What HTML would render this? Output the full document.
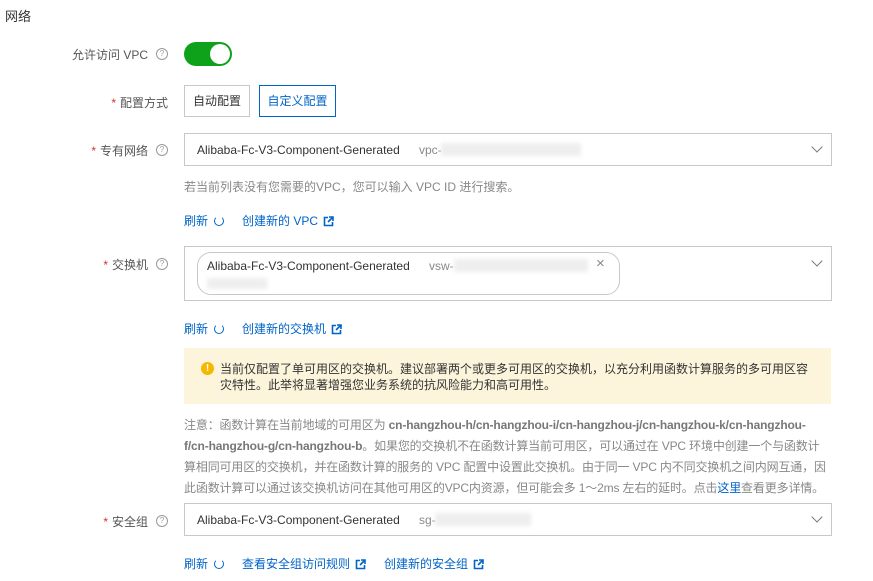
<!DOCTYPE html>
<html><head><meta charset="utf-8"><style>
body{margin:0;width:873px;height:581px;background:#fff;font-family:"Liberation Sans","Noto Sans CJK SC",sans-serif;font-size:12px;color:#333;position:relative;overflow:hidden}
.a{position:absolute;white-space:nowrap}
.lab{position:absolute;text-align:right;left:0;color:#555}
.star{color:#d93026;margin-right:4px}
.q{position:absolute;width:10px;height:10px;border:1px solid #999;border-radius:50%;font-size:8px;line-height:10px;text-align:center;color:#999}
.sel{position:absolute;left:184px;width:646px;border:1px solid #c8c8c8;background:#fff}
.chev{position:absolute;right:10px;width:7px;height:7px;border-right:1.3px solid #777;border-bottom:1.3px solid #777;transform:rotate(45deg)}
.blur{position:absolute;background:#eee;filter:blur(2px)}
.link{color:#0064c8}
.ref{display:inline-block;width:8px;height:8px;border:1.3px solid #0064c8;border-top-color:transparent;border-radius:50%;vertical-align:-1px;margin-left:6px}
svg.ext{vertical-align:-2px;margin-left:5px}
.gray{color:#888}
</style></head><body>
<div class="a" style="left:5px;top:6px;font-size:13px;color:#333">网络</div>

<div class="lab" style="top:46px;width:148px">允许访问 VPC</div><div class="q" style="left:156px;top:48px">?</div>
<div class="a" style="left:184px;top:42px;width:48px;height:24px;border-radius:12px;background:#0ea11a"><div style="position:absolute;right:2px;top:2px;width:20px;height:20px;border-radius:50%;background:#fff"></div></div>

<div class="lab" style="top:94px;width:168px"><span class="star">*</span>配置方式</div>
<div class="a" style="left:184px;top:85px;width:64px;height:30px;border:1px solid #c8c8c8;text-align:center;line-height:30px;color:#333">自动配置</div>
<div class="a" style="left:259px;top:85px;width:75px;height:30px;border:1px solid #0064c8;text-align:center;line-height:30px;color:#0064c8">自定义配置</div>

<div class="lab" style="top:142px;width:148px"><span class="star">*</span>专有网络</div><div class="q" style="left:156px;top:144px">?</div>
<div class="sel" style="top:133px;height:31px"><span class="a" style="left:12px;top:9px">Alibaba-Fc-V3-Component-Generated</span><span class="a gray" style="left:234px;top:9px">vpc-</span><div class="blur" style="left:256px;top:9px;width:140px;height:13px"></div><div class="chev" style="top:9px"></div></div>
<div class="a gray" style="left:184px;top:178px">若当前列表没有您需要的VPC，您可以输入 VPC ID 进行搜索。</div>
<div class="a link" style="left:184px;top:212px">刷新<span class="ref"></span><span style="margin-left:18px">创建新的 VPC</span><svg class="ext" width="11" height="11" viewBox="0 0 11 11"><path d="M5 1.5H1.5V9.5H9.5V6" fill="none" stroke="#0064c8" stroke-width="1.6"/><path d="M6 1H10V5M10 1L5 6" fill="none" stroke="#0064c8" stroke-width="1.6"/></svg></div>

<div class="lab" style="top:256px;width:148px"><span class="star">*</span>交换机</div><div class="q" style="left:156px;top:258px">?</div>
<div class="sel" style="top:246px;height:53px"><div class="a" style="left:12px;top:5px;width:421px;height:41px;border:1px solid #c8c8c8;border-radius:14px"><span class="a" style="left:9px;top:6px">Alibaba-Fc-V3-Component-Generated</span><span class="a gray" style="left:231px;top:6px">vsw-</span><div class="blur" style="left:256px;top:6px;width:134px;height:13px"></div><span class="a gray" style="left:398px;top:2px;font-size:15px">×</span><div class="blur" style="left:9px;top:25px;width:60px;height:11px"></div></div><div class="chev" style="top:10px"></div></div>
<div class="a link" style="left:184px;top:320px">刷新<span class="ref"></span><span style="margin-left:18px">创建新的交换机</span><svg class="ext" width="11" height="11" viewBox="0 0 11 11"><path d="M5 1.5H1.5V9.5H9.5V6" fill="none" stroke="#0064c8" stroke-width="1.6"/><path d="M6 1H10V5M10 1L5 6" fill="none" stroke="#0064c8" stroke-width="1.6"/></svg></div>

<div class="a" style="left:184px;top:348px;width:647px;height:56px;background:#fcf5dc"></div>
<div class="a" style="left:201px;top:362px;width:13px;height:13px;border-radius:50%;background:#f5b800;color:#fff;font-size:10px;font-weight:bold;text-align:center;line-height:13px">!</div>
<div class="a" style="left:220px;top:361px;line-height:16px;color:#333">当前仅配置了单可用区的交换机。建议部署两个或更多可用区的交换机，以充分利用函数计算服务的多可用区容<br>灾特性。此举将显著增强您业务系统的抗风险能力和高可用性。</div>

<div class="a gray" style="left:184px;top:415px;line-height:21px;letter-spacing:-0.15px">注意：函数计算在当前地域的可用区为 <b style="color:#777">cn-hangzhou-h/cn-hangzhou-i/cn-hangzhou-j/cn-hangzhou-k/cn-hangzhou-<br>f/cn-hangzhou-g/cn-hangzhou-b</b>。如果您的交换机不在函数计算当前可用区，可以通过在 VPC 环境中创建一个与函数计<br>算相同可用区的交换机，并在函数计算的服务的 VPC 配置中设置此交换机。由于同一 VPC 内不同交换机之间内网互通，因<br>此函数计算可以通过该交换机访问在其他可用区的VPC内资源，但可能会多 1～2ms 左右的延时。点击<span class="link">这里</span>查看更多详情。</div>

<div class="lab" style="top:513px;width:148px"><span class="star">*</span>安全组</div><div class="q" style="left:156px;top:515px">?</div>
<div class="sel" style="top:503px;height:31px"><span class="a" style="left:12px;top:9px">Alibaba-Fc-V3-Component-Generated</span><span class="a gray" style="left:234px;top:9px">sg-</span><div class="blur" style="left:250px;top:9px;width:96px;height:13px"></div><div class="chev" style="top:9px"></div></div>
<div class="a link" style="left:184px;top:555px">刷新<span class="ref"></span><span style="margin-left:18px">查看安全组访问规则</span><svg class="ext" width="11" height="11" viewBox="0 0 11 11"><path d="M5 1.5H1.5V9.5H9.5V6" fill="none" stroke="#0064c8" stroke-width="1.6"/><path d="M6 1H10V5M10 1L5 6" fill="none" stroke="#0064c8" stroke-width="1.6"/></svg><span style="margin-left:18px">创建新的安全组</span><svg class="ext" width="11" height="11" viewBox="0 0 11 11"><path d="M5 1.5H1.5V9.5H9.5V6" fill="none" stroke="#0064c8" stroke-width="1.6"/><path d="M6 1H10V5M10 1L5 6" fill="none" stroke="#0064c8" stroke-width="1.6"/></svg></div>
</body></html>
